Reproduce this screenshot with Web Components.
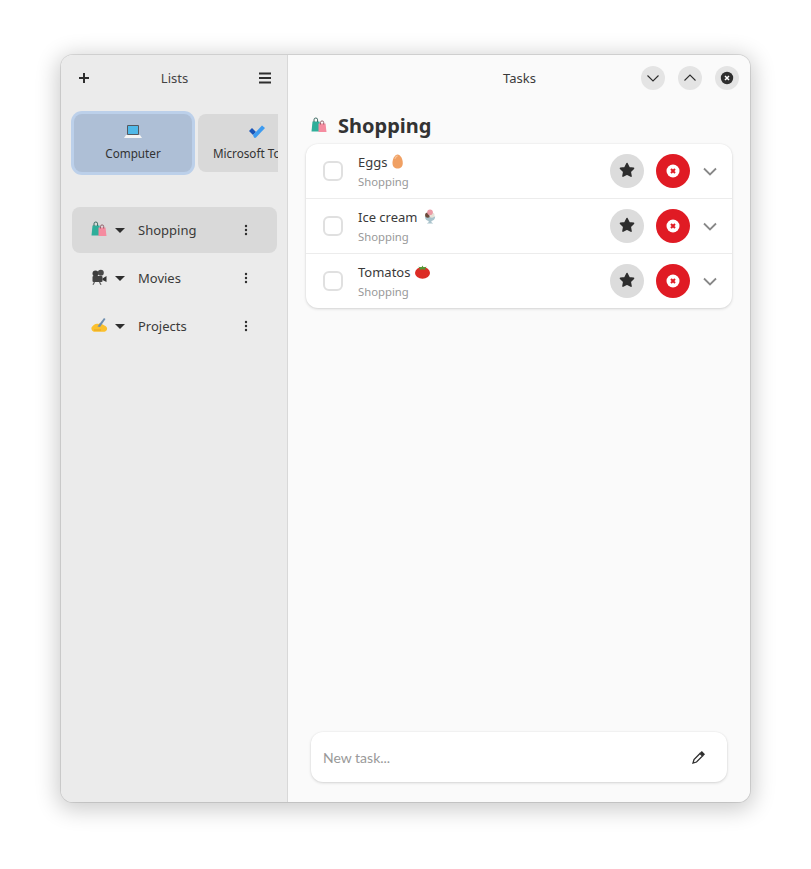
<!DOCTYPE html>
<html>
<head>
<meta charset="utf-8">
<title>Tasks</title>
<style>
  html, body { margin: 0; background: #fff; }
  body { padding: 55px 61px 67px; font-family: "Noto Sans", sans-serif; color: #333; }
</style>
</head>
<body>
<app-window>
  <side-bar slot="side">
    <list-row active name="Shopping" icon="bags"></list-row>
    <list-row name="Movies" icon="camera"></list-row>
    <list-row name="Projects" icon="hand"></list-row>
  </side-bar>
  <task-pane slot="main">
    <task-row name="Eggs" icon="egg"></task-row>
    <task-row name="Ice cream" icon="icecream"></task-row>
    <task-row name="Tomatos" icon="tomato"></task-row>
  </task-pane>
</app-window>

<script>
// little pictures used in place of colour emoji
const ICONS = {
  bags: `<svg width="16" height="16" viewBox="0 0 16 16"><path d="M1.500 4.500h7l1.500 10H.5z" fill="#2fae9a"/><path d="M3 5V2.800a1.800 1.800 0 0 1 3.600 0V5" fill="none" stroke="#2b5d55" stroke-width=".9"/><path d="M7.500 6.500h7l1 8.500h-8z" fill="#f58ca0"/><path d="M9.500 7.500V5.500a1.600 1.600 0 0 1 3.200 0v2" fill="none" stroke="#8a5560" stroke-width=".9"/></svg>`,
  camera: `<svg width="16" height="16" viewBox="0 0 16 16"><circle cx="4.500" cy="4.500" r="3" fill="#3d3d3d"/><circle cx="9.800" cy="3.800" r="3" fill="#4a4a4a"/><rect x="1.500" y="7" width="10" height="6" rx="1" fill="#424242"/><path d="M11.500 9.500l4-2.500v6l-4-2z" fill="#333"/><path d="M3.500 13l-1.500 2.700M8.500 13l1.500 2.700" stroke="#666" stroke-width="1.300"/></svg>`,
  hand: `<svg width="17" height="16" viewBox="0 0 17 16"><path d="M.5 10.500c2-3.500 5-4.500 7-3.500l1.500-1 4.500 2.500c2 1 3 2 2.500 4-.4 1.500-2 2.300-3.500 2.300H4C1.500 14.800 0 12.500 .5 10.500z" fill="#fbc02d"/><path d="M6.500 9.500L13 1l1.500 1L9 10z" fill="#6f8fb0"/><path d="M3 13h7" stroke="#e09f1f" stroke-width=".8"/></svg>`,
  egg: `<svg width="12" height="16" viewBox="0 0 12 16"><path d="M6 .5c3 0 5.500 5 5.500 9S9 15.500 6 15.500.5 13.500.5 9.500 3 .5 6 .5z" fill="#f0a063"/><path d="M3 5c1-2 2-3 3-3" stroke="#f7c49a" stroke-width="1.200" fill="none"/></svg>`,
  icecream: `<svg width="15" height="16" viewBox="0 0 15 16"><path d="M2 8h11c0 3-2 4.500-4 4.800V14l2 1.500H4L6 14v-1.200C4 12.500 2 11 2 8z" fill="#a9c3cc"/><circle cx="5" cy="6.500" r="2.800" fill="#6b4a3a"/><circle cx="9.500" cy="6.500" r="2.800" fill="#e8e2d8"/><circle cx="7.500" cy="3.500" r="3" fill="#ec9aa5"/></svg>`,
  tomato: `<svg width="16" height="16" viewBox="0 0 16 16"><ellipse cx="8" cy="9.500" rx="8" ry="6.300" fill="#dc2b25"/><path d="M8 1.500l1 2 3.500-.5-2 2 1.500 1.500-4-.8-4 .8L5.500 5l-2-2 3.500.5z" fill="#4f9a34"/></svg>`,
  laptop: `<svg width="18" height="16" viewBox="0 0 18 16"><rect x="3" y="2" width="12" height="10" rx="1" fill="#55595f"/><rect x="4" y="3" width="10" height="8" fill="#4fb8e8"/><path d="M2 12h14l2 3H0z" fill="#f4f4f4"/></svg>`,
  todo: `<svg width="16" height="14" viewBox="0 0 16 14"><path d="M0 7l3-3 4 4-3 3z" fill="#1a55b8"/><path d="M4 11L13 1.500l3 2.500-9 9.500a1.500 1.500 0 0 1-2 0z" fill="#3d9bf0"/></svg>`
};

class AppWindow extends HTMLElement {
  constructor() {
    super();
    this.attachShadow({ mode: 'open' }).innerHTML = `
      <style>
        :host {
          display: flex;
          width: 689px;
          height: 747px;
          border-radius: 12px;
          overflow: hidden;
          background: #fafafa;
          box-shadow: 0 0 0 1px rgba(0,0,0,.1), 0 4px 22px 4px rgba(0,0,0,.2);
        }
      </style>
      <slot name="side"></slot>
      <slot name="main"></slot>
    `;
  }
}

class RoundButton extends HTMLElement {
  constructor() {
    super();
    this.attachShadow({ mode: 'open' }).innerHTML = `
      <style>
        :host {
          display: flex;
          align-items: center;
          justify-content: center;
          flex: none;
          width: var(--size, 24px);
          height: var(--size, 24px);
          border-radius: 50%;
          background: var(--bg, #e4e4e4);
        }
      </style>
      <slot></slot>
    `;
  }
}

class SideBar extends HTMLElement {
  constructor() {
    super();
    this.attachShadow({ mode: 'open' }).innerHTML = `
      <style>
        :host {
          display: block;
          flex: none;
          width: 226px;
          background: #ebebeb;
          border-right: 1px solid #d8d8d8;
          font-size: 13px;
        }
        header { display: flex; align-items: center; justify-content: space-between; height: 46px; padding: 0 15px 0 16px; color: #444; }
        header span { margin-left: 0; }
        .tabs { display: flex; gap: 6px; width: 207px; height: 64px; margin: 10px 0 0 10px; padding-left: 3px; box-sizing: border-box; overflow: hidden; align-items: center; }
        .tab { flex: none; width: 118px; height: 58px; padding-top: 9px; box-sizing: border-box; border-radius: 8px; background: #d9d9d9; display: flex; flex-direction: column; align-items: center; color: #333; font-size: 11.700px; line-height: 18px; white-space: nowrap; }
        .tab svg { display: block; height: 16px; margin-bottom: 5px; }
        .tab.on { background: #aebfd6; box-shadow: 0 0 0 3px #bcd0ea; }
        .tab.off span { margin-left: -2px; }
        .list { display: flex; flex-direction: column; gap: 2px; margin: 32px 10px 0 11px; }
      </style>
      <header>
        <svg width="14" height="14" viewBox="0 0 14 14"><path d="M7 2v10M2 7h10" stroke="#2e2e2e" stroke-width="2"/></svg>
        <span>Lists</span>
        <svg width="14" height="14" viewBox="0 0 14 14"><path d="M1 2.500h12M1 7h12M1 11.500h12" stroke="#2e2e2e" stroke-width="2"/></svg>
      </header>
      <div class="tabs">
        <div class="tab on">${ICONS.laptop}<span>Computer</span></div>
        <div class="tab off">${ICONS.todo}<span>Microsoft To Do</span></div>
      </div>
      <div class="list"><slot></slot></div>
    `;
  }
}

class ListRow extends HTMLElement {
  constructor() {
    super();
    this.attachShadow({ mode: 'open' }).innerHTML = `
      <style>
        :host { display: flex; align-items: center; height: 46px; border-radius: 8px; font-size: 13px; color: #3a3a3a; padding-left: 19px; }
        :host([active]) { background: #d9d9d9; }
        .ico { width: 17px; display: flex; margin-top: -2px; }
        .arrow { width: 0; height: 0; margin-left: 7px; border: 5.500px solid transparent; border-top: 5px solid #2e2e2e; border-bottom: 0; }
        .name { margin-left: 13px; flex: 1; }
        svg.dots { margin-right: 29px; }
      </style>
      <span class="ico">${ICONS[this.getAttribute('icon')]}</span>
      <span class="arrow"></span>
      <span class="name">${this.getAttribute('name')}</span>
      <svg class="dots" width="4" height="12" viewBox="0 0 4 12"><circle cx="2" cy="2" r="1.200" fill="#2e2e2e"/><circle cx="2" cy="6" r="1.200" fill="#2e2e2e"/><circle cx="2" cy="10" r="1.200" fill="#2e2e2e"/></svg>
    `;
  }
}

class TaskPane extends HTMLElement {
  constructor() {
    super();
    this.attachShadow({ mode: 'open' }).innerHTML = `
      <style>
        :host { display: flex; flex-direction: column; flex: 1; min-width: 0; background: #fafafa; font-size: 13px; }
        header { display: flex; align-items: center; height: 46px; padding-right: 11px; }
        header .title { flex: 1; text-align: center; color: #3a3a3a; padding-left: 110px; }
        .btns { display: flex; gap: 13px; }
        h1 { display: flex; align-items: center; gap: 11px; margin: 10px 0 0 23px; height: 30px; font-size: 20px; font-weight: 700; line-height: 30px; color: #333; }
        h1 svg { margin-top: -3px; }
        .card { margin: 3px 18px 0 18px; background: #fff; border-radius: 12px; box-shadow: 0 0 0 1px rgba(0,0,0,.015), 0 1px 3px rgba(0,0,0,.15); overflow: hidden; }
        .spacer { flex: 1; }
        .entry { display: flex; align-items: center; justify-content: space-between; height: 50px; margin: 0 23px 20px 23px; padding: 0 21px 0 12px; border-radius: 12px; background: #fff; box-shadow: 0 0 0 1px rgba(0,0,0,.015), 0 1px 3px rgba(0,0,0,.15); font-family: Lato, sans-serif; font-size: 14px; color: #999; }
      </style>
      <header>
        <span class="title">Tasks</span>
        <div class="btns">
          <round-button><svg width="14" height="14" viewBox="0 0 14 14"><path d="M1.500 4.500L7 10l5.500-5.500" fill="none" stroke="#2e2e2e" stroke-width="1.100"/></svg></round-button>
          <round-button><svg width="14" height="14" viewBox="0 0 14 14"><path d="M1.500 9.500L7 4l5.500 5.500" fill="none" stroke="#2e2e2e" stroke-width="1.100"/></svg></round-button>
          <round-button><svg width="14" height="14" viewBox="0 0 14 14"><circle cx="7" cy="7" r="6.200" fill="#2e2e2e"/><path d="M5 5l4 4M9 5l-4 4" stroke="#fff" stroke-width="1.500"/></svg></round-button>
        </div>
      </header>
      <h1>${ICONS.bags}<span>Shopping</span></h1>
      <div class="card"><slot></slot></div>
      <div class="spacer"></div>
      <div class="entry">
        <span>New task...</span>
        <svg width="14" height="14" viewBox="0 0 14 14"><path d="M9.800 1l3.200 3.200-2 2-3.200-3.200z" fill="#2e2e2e"/><path d="M8 3.500l2.500 2.500-6 6-3.500 1 1-3.500z" fill="none" stroke="#2e2e2e" stroke-width="1.300"/></svg>
      </div>
    `;
  }
}

class TaskRow extends HTMLElement {
  constructor() {
    super();
    this.attachShadow({ mode: 'open' }).innerHTML = `
      <style>
        :host { display: flex; align-items: center; height: 55px; box-sizing: border-box; padding: 0 15px 0 17px; border-bottom: 1px solid #ececec; }
        :host(:last-child) { height: 54px; border-bottom: 0; }
        .check { width: 20px; height: 20px; box-sizing: border-box; border: 2px solid #e0e0e0; border-radius: 6px; background: #fff; flex: none; }
        .text { flex: 1; margin-left: 15px; padding-top: 1px; }
        .name { display: flex; align-items: center; gap: 5px; font-size: 13px; line-height: 18px; color: #3a3a3a; }
        .sub { font-size: 11.300px; line-height: 18px; margin-top: 2px; color: #999; }
        .star { --size: 34px; --bg: #dcdcdc; margin-right: 12px; }
        .del { --size: 34px; --bg: #e01b24; }
        .chev { margin-left: 13px; }
        .name svg { height: 15px; width: auto; margin-top: 0; }
      </style>
      <span class="check"></span>
      <div class="text">
        <div class="name"><span>${this.getAttribute('name')}</span>${ICONS[this.getAttribute('icon')]}</div>
        <div class="sub">Shopping</div>
      </div>
      <round-button class="star"><svg width="16" height="16" viewBox="0 0 16 16" style="margin-top:-2px"><path d="M8 1.500l2 4.200 4.500.7-3.300 3.200.8 4.500L8 12l-4 2.100.8-4.500-3.300-3.200 4.500-.7z" fill="#2e2e2e" stroke="#2e2e2e" stroke-width="1.600" stroke-linejoin="round"/></svg></round-button>
      <round-button class="del"><svg width="14" height="14" viewBox="0 0 14 14"><circle cx="7" cy="7" r="6.500" fill="#fff"/><path d="M5 5l4 4M9 5l-4 4" stroke="#e01b24" stroke-width="2"/></svg></round-button>
      <svg class="chev" width="14" height="14" viewBox="0 0 14 14"><path d="M1 4.500L7 10.500l6-6" fill="none" stroke="#888" stroke-width="1.800"/></svg>
    `;
  }
}

customElements.define('app-window', AppWindow);
customElements.define('round-button', RoundButton);
customElements.define('side-bar', SideBar);
customElements.define('list-row', ListRow);
customElements.define('task-pane', TaskPane);
customElements.define('task-row', TaskRow);
</script>
</body>
</html>
